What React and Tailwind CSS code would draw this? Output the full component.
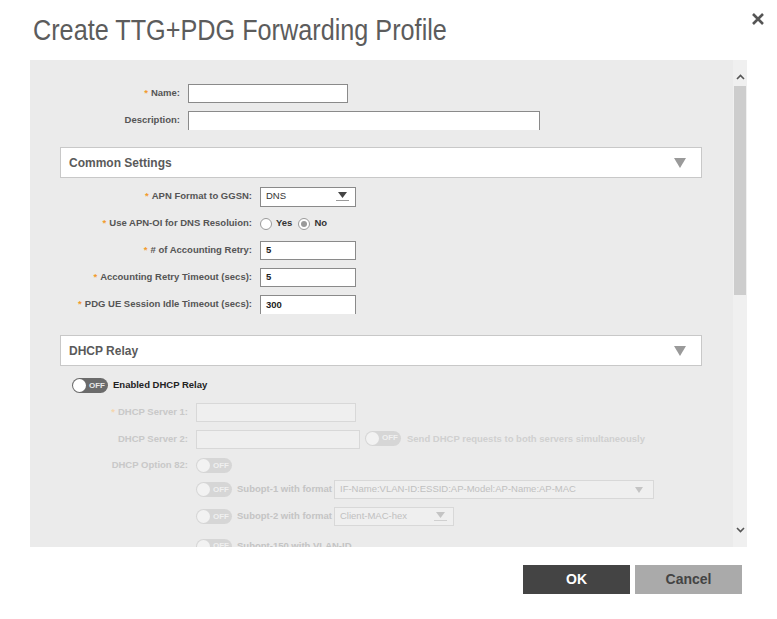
import React from 'react';

const Req = () => <span className="text-[#f29b2e] mr-[3px]">*</span>;

const Toggle = ({ disabled }) => (
  <span
    className={`inline-flex items-center h-[15px] w-[36px] rounded-full px-[1px] shrink-0 ${
      disabled ? 'bg-[#d6d6d6]' : 'bg-[#6b6b6b]'
    }`}
  >
    <span className={`w-[13px] h-[13px] rounded-full ${disabled ? 'bg-[#f2f2f2]' : 'bg-white'}`} />
    <span
      className={`ml-[3px] text-[8px] font-bold leading-none ${disabled ? 'text-[#f0f0f0]' : 'text-[#e8e8e8]'}`}
    >
      OFF
    </span>
  </span>
);

const Caret = ({ light }) => (
  <span className="flex flex-col items-center">
    <svg width="9" height="6" viewBox="0 0 9 6">
      <path d="M0 0 H9 L4.5 6 Z" fill={light ? '#c4c4c4' : '#444'} />
    </svg>
    <span className={`mt-[2px] block w-[13px] h-px ${light ? 'bg-[#d0d0d0]' : 'bg-[#999]'}`} />
  </span>
);

const SectionHeader = ({ title }) => (
  <div className="flex items-center justify-between h-[31px] bg-white border border-[#c8c8c8] pl-[8px] pr-[15px]">
    <span className="text-[12px] font-bold text-[#5a5a5a]">{title}</span>
    <svg width="12" height="10" viewBox="0 0 12 10">
      <path d="M0 0 H12 L6 10 Z" fill="#9a9a9a" />
    </svg>
  </div>
);

const Radio = ({ checked, label }) => (
  <span className="inline-flex items-center mr-[6px]">
    <span className="w-[12px] h-[12px] rounded-full border border-[#9a9a9a] bg-white flex items-center justify-center">
      {checked && <span className="w-[6px] h-[6px] rounded-full bg-[#9a9a9a]" />}
    </span>
    <span className="ml-[4px] text-[9.5px] font-bold text-[#333]">{label}</span>
  </span>
);

const CommonRow = ({ label, children }) => (
  <div className="flex items-center h-[27px]">
    <div className="w-[200px] text-right pr-[8px] text-[9.5px] font-bold text-[#555] whitespace-nowrap">
      <Req />
      {label}
    </div>
    {children}
  </div>
);

const TextBox = ({ value, noBottom }) => (
  <div
    className={`w-[96px] h-[19px] bg-white border border-[#8a8a8a] ${noBottom ? 'border-b-0' : ''} px-[5px] flex items-center text-[9.5px] font-bold text-[#222]`}
  >
    {value}
  </div>
);

const DisabledLabel = ({ children, req }) => (
  <div className="w-[136px] text-right pr-[8px] text-[9.5px] font-bold text-[#c8c8c8] whitespace-nowrap">
    {req && <span className="text-[#f6d6ad] mr-[3px]">*</span>}
    {children}
  </div>
);

export default function App() {
  return (
    <div className="w-[777px] h-[619px] bg-white relative" style={{ fontFamily: '"Liberation Sans", Arial, sans-serif' }}>
      <div className="h-[60px] flex items-start justify-between">
        <div className="pl-[33px] pt-[14px]">
          <span className="inline-block origin-left scale-x-[0.87] text-[29px] leading-[32px] text-[#5c5c5c] whitespace-nowrap">
            Create TTG+PDG Forwarding Profile
          </span>
        </div>
        <svg width="14" height="14" viewBox="0 0 14 14" className="mt-[12px] mr-[12px]">
          <path d="M2 2 L12 12 M12 2 L2 12" stroke="#555" strokeWidth="2.6" />
        </svg>
      </div>

      <div className="mx-[30px] w-[717px] h-[487px] bg-[#ebebeb] flex overflow-hidden">
        <div className="flex-1 pl-[30px] pr-[31px] overflow-hidden">
          {/* name + description */}
          <div className="pt-[24px] h-[87px]">
            <div className="flex items-center h-[19px]">
              <div className="w-[128px] text-right pr-[8px] text-[9.5px] font-bold text-[#555]">
                <Req />
                Name:
              </div>
              <div className="w-[160px] h-[19px] bg-white border border-[#8a8a8a]" />
            </div>
            <div className="flex items-center h-[19px] mt-[8px]">
              <div className="w-[128px] text-right pr-[8px] text-[9.5px] font-bold text-[#555]">Description:</div>
              <div className="w-[352px] h-[19px] bg-white border border-[#8a8a8a] border-b-0" />
            </div>
          </div>

          <SectionHeader title="Common Settings" />
          <div className="pt-[5px] h-[157px]">
            <CommonRow label="APN Format to GGSN:">
              <div className="w-[96px] h-[20px] bg-white border border-[#8a8a8a] flex items-center justify-between pl-[5px] pr-[6px]">
                <span className="text-[9.5px] text-[#333]">DNS</span>
                <Caret />
              </div>
            </CommonRow>
            <CommonRow label="Use APN-OI for DNS Resoluion:">
              <Radio label="Yes" />
              <Radio checked label="No" />
            </CommonRow>
            <CommonRow label="# of Accounting Retry:">
              <TextBox value="5" />
            </CommonRow>
            <CommonRow label="Accounting Retry Timeout (secs):">
              <TextBox value="5" />
            </CommonRow>
            <CommonRow label="PDG UE Session Idle Timeout (secs):">
              <TextBox value="300" noBottom />
            </CommonRow>
          </div>

          <SectionHeader title="DHCP Relay" />
          <div className="pt-[6px]">
            <div className="flex items-center h-[27px] pl-[12px]">
              <Toggle />
              <span className="ml-[5px] text-[9.5px] font-bold text-[#222]">Enabled DHCP Relay</span>
            </div>
            <div className="flex items-center h-[27px]">
              <DisabledLabel req>DHCP Server 1:</DisabledLabel>
              <div className="w-[160px] h-[19px] bg-[#efefef] border border-[#d8d8d8]" />
            </div>
            <div className="flex items-center h-[27px]">
              <DisabledLabel>DHCP Server 2:</DisabledLabel>
              <div className="w-[164px] h-[19px] bg-[#efefef] border border-[#d8d8d8]" />
              <span className="ml-[5px]">
                <Toggle disabled />
              </span>
              <span className="ml-[6px] text-[9.5px] font-bold text-[#d0d0d0] whitespace-nowrap">
                Send DHCP requests to both servers simultaneously
              </span>
            </div>
            <div className="flex items-center h-[25px]">
              <DisabledLabel>DHCP Option 82:</DisabledLabel>
              <Toggle disabled />
            </div>
            <div className="flex items-center h-[23px] pl-[136px]">
              <Toggle disabled />
              <span className="ml-[5px] w-[97px] text-[9.5px] font-bold text-[#c4c4c4] whitespace-nowrap">
                Subopt-1 with format
              </span>
              <div className="w-[320px] h-[19px] bg-[#efefef] border border-[#d8d8d8] flex items-center justify-between pl-[5px] pr-[10px]">
                <span className="text-[9.5px] text-[#c0c0c0] whitespace-nowrap">IF-Name:VLAN-ID:ESSID:AP-Model:AP-Name:AP-MAC</span>
                <svg width="8" height="6" viewBox="0 0 8 6">
                  <path d="M0 0 H8 L4 6 Z" fill="#c4c4c4" />
                </svg>
              </div>
            </div>
            <div className="flex items-center h-[31px] pl-[136px]">
              <Toggle disabled />
              <span className="ml-[5px] w-[97px] text-[9.5px] font-bold text-[#c4c4c4] whitespace-nowrap">
                Subopt-2 with format
              </span>
              <div className="w-[120px] h-[19px] bg-[#efefef] border border-[#d8d8d8] flex items-center justify-between pl-[5px] pr-[6px]">
                <span className="text-[9.5px] text-[#c0c0c0]">Client-MAC-hex</span>
                <Caret light />
              </div>
            </div>
            <div className="flex items-center h-[28px] pl-[136px]">
              <Toggle disabled />
              <span className="ml-[5px] text-[9.5px] font-bold text-[#c4c4c4] whitespace-nowrap">
                Subopt-150 with VLAN-ID
              </span>
            </div>
          </div>
        </div>

        {/* scrollbar */}
        <div className="w-[14px] bg-[#f0f0f0] flex flex-col items-center">
          <svg width="9" height="6" viewBox="0 0 9 6" className="mt-[14px]">
            <path d="M1 5 L4.5 1.5 L8 5" stroke="#555" strokeWidth="1.6" fill="none" />
          </svg>
          <div className="mt-[6px] w-[12px] h-[209px] bg-[#cdcdcd]" />
          <div className="flex-1" />
          <svg width="9" height="6" viewBox="0 0 9 6" className="mb-[14px]">
            <path d="M1 1 L4.5 4.5 L8 1" stroke="#555" strokeWidth="1.6" fill="none" />
          </svg>
        </div>
      </div>

      <div className="flex justify-end gap-[5px] pr-[35px] mt-[18px]">
        <button className="w-[107px] h-[29px] bg-[#444] text-white text-[14px] font-bold">OK</button>
        <button className="w-[107px] h-[29px] bg-[#aaa] text-[#444] text-[14px] font-bold">Cancel</button>
      </div>
    </div>
  );
}
